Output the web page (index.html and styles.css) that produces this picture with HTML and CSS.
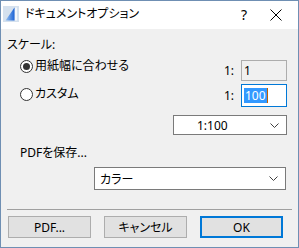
FILE: index.html
```html
<!DOCTYPE html>
<html lang="ja">
<head>
    <meta charset="UTF-8">
    <title>ドキュメントオプション</title>
    <link rel="stylesheet" href="styles.css">
</head>
<body>
    <div class="window">
        <div class="titlebar">
            <svg class="app-icon" width="16" height="16" viewBox="0 0 16 16">
                <defs>
                    <linearGradient id="sail" x1="0" y1="0" x2="1" y2="0">
                        <stop offset="0" stop-color="#9cc4f0"/>
                        <stop offset="1" stop-color="#1a62d6"/>
                    </linearGradient>
                </defs>
                <rect x="0" y="0" width="16" height="16" fill="#d5e1ee"/>
                <path d="M11.5 1.5 L11.5 14.5 L2.5 14.5 Z" fill="url(#sail)"/>
                <rect x="12" y="1.5" width="2" height="13" fill="#f4f7fb"/>
            </svg>
            <span class="title">ドキュメントオプション</span>
            <span class="help">?</span>
            <svg class="close" width="12" height="12" viewBox="0 0 12 12">
                <path d="M0.5 0.5 L11.5 11.5 M11.5 0.5 L0.5 11.5" stroke="#000" stroke-width="1" fill="none"/>
            </svg>
        </div>

        <div class="content">
            <div class="group-label">スケール:</div>

            <div class="scale">
                <div class="radios">
                    <div class="radio checked"><span class="circle"></span>用紙幅に合わせる</div>
                    <div class="radio"><span class="circle"></span>カスタム</div>
                </div>

                <div class="fields">
                    <div class="field-row">
                        <span class="ratio">1:</span>
                        <div class="input disabled">1</div>
                    </div>
                    <div class="field-row">
                        <span class="ratio">1:</span>
                        <div class="input focused"><span class="selected">100</span><span class="caret"></span></div>
                    </div>
                    <div class="select scale-select">
                        <span class="value">1:100</span>
                        <svg class="chevron" width="9" height="5" viewBox="0 0 9 5">
                            <path d="M0.5 0.5 L4.5 4.5 L8.5 0.5" stroke="#404040" fill="none"/>
                        </svg>
                    </div>
                </div>
            </div>

            <div class="group-label pdf-label">PDFを保存...</div>

            <div class="select color-select">
                <span class="value">カラー</span>
                <svg class="chevron" width="9" height="5" viewBox="0 0 9 5">
                    <path d="M0.5 0.5 L4.5 4.5 L8.5 0.5" stroke="#404040" fill="none"/>
                </svg>
            </div>

            <div class="separator"></div>

            <div class="buttons">
                <div class="button">PDF...</div>
                <div class="button">キャンセル</div>
                <div class="button default">OK</div>
            </div>
        </div>
    </div>
</body>
</html>
```

FILE: styles.css
```css
body {
    margin: 0;
    padding: 0;
    font-family: "Noto Sans", "Noto Sans CJK JP", sans-serif;
    font-size: 12px;
    font-feature-settings: "palt";
    color: #000;
}

.window {
    width: 299px;
    height: 248px;
    box-sizing: border-box;
    border: 1px solid #6f8fb3;
    background-color: #f0f0f0;
    display: flex;
    flex-direction: column;
}

.titlebar {
    height: 28px;
    box-sizing: border-box;
    padding: 0 0 3px 2px;
    background-color: #fff;
    display: flex;
    align-items: center;
}

.app-icon {
    flex: none;
}

.title {
    margin-left: 6px;
    flex: 1;
    font-size: 12px;
    line-height: 16px;
}

.help {
    font-size: 14px;
    line-height: 16px;
    margin-right: 23px;
    margin-top: 3px;
}

.close {
    margin-right: 16px;
    margin-top: 2px;
}

.content {
    display: flex;
    flex-direction: column;
    padding: 8px 0 0 6px;
}

.group-label {
    line-height: 16px;
}

.scale {
    display: flex;
    justify-content: space-between;
}

.radios {
    display: flex;
    flex-direction: column;
    gap: 12px;
    padding: 5px 0 0 13px;
}

.radio {
    display: flex;
    align-items: center;
    line-height: 16px;
}

.circle {
    width: 13px;
    height: 13px;
    box-sizing: border-box;
    border: 1px solid #333;
    border-radius: 50%;
    background-color: #fff;
    margin-right: 2px;
    display: flex;
    align-items: center;
    justify-content: center;
}

.radio.checked .circle::after {
    content: '';
    width: 7px;
    height: 7px;
    border-radius: 50%;
    background-color: #333;
}

.fields {
    display: flex;
    flex-direction: column;
    align-items: flex-end;
    padding: 7px 11px 0 0;
}

.field-row {
    display: flex;
    align-items: center;
    gap: 7px;
    margin-bottom: 3px;
}

.ratio {
    font-size: 12px;
}

.input {
    width: 46px;
    height: 21px;
    box-sizing: border-box;
    border: 1px solid #adadad;
    padding-left: 2px;
    display: flex;
    align-items: center;
}

.input.disabled {
    background-color: #f0f0f0;
}

.input.focused {
    height: 23px;
    border-color: #0078d7;
    background-color: #fff;
}

.selected {
    background-color: #3399ff;
    color: #fff;
    line-height: 15px;
    padding: 0 1px;
}

.caret {
    width: 1px;
    height: 15px;
    background-color: #c06000;
}

.select {
    height: 20px;
    box-sizing: border-box;
    border: 1px solid #7a7a7a;
    background-color: #fff;
    display: flex;
    align-items: center;
    padding: 0 7px 0 5px;
}

.select .value {
    flex: 1;
}

.scale-select {
    width: 114px;
    margin-top: 5px;
}

.scale-select .value {
    padding-left: 18px;
}

.pdf-label {
    margin: 10px 0 0 13px;
}

.color-select {
    width: 192px;
    height: 23px;
    margin: 6px 0 0 87px;
}

.separator {
    width: 285px;
    height: 1px;
    background-color: #a0a0a0;
    margin-top: 19px;
}

.buttons {
    display: flex;
    gap: 13px;
    margin: 6px 0 0 1px;
}

.button {
    width: 83px;
    height: 22px;
    box-sizing: border-box;
    border: 1px solid #adadad;
    background-color: #e1e1e1;
    display: flex;
    align-items: center;
    justify-content: center;
}

.button.default {
    border: 2px solid #0078d7;
}
```
